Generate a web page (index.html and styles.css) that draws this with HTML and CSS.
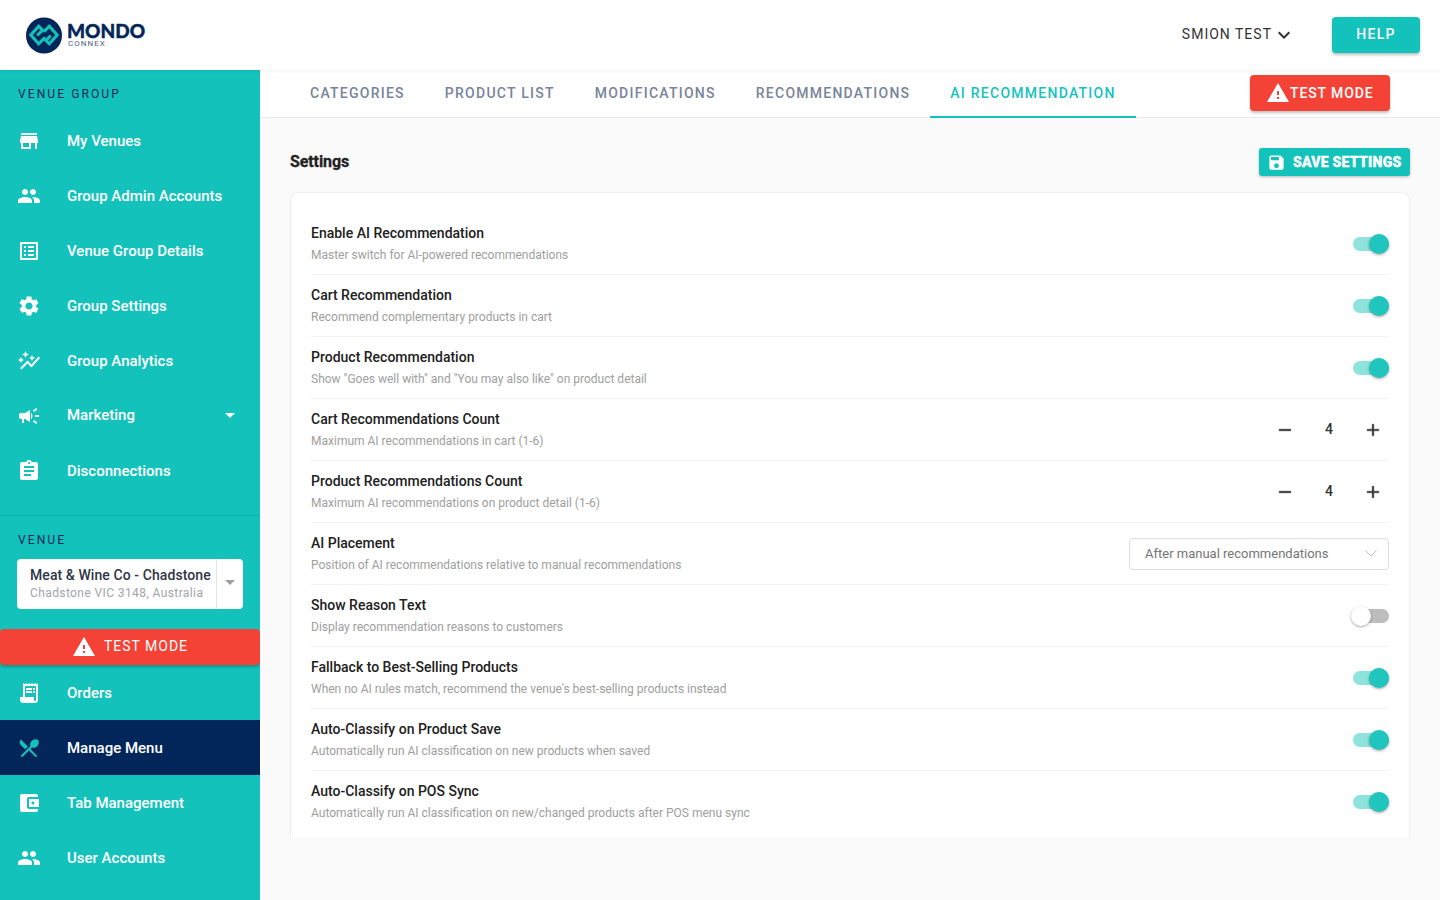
FILE: index.html
```html
<!DOCTYPE html>
<html lang="en">
<head>
    <meta charset="UTF-8">
    <meta name="viewport" content="width=device-width, initial-scale=1.0">
    <title>AI Recommendation Settings</title>
    <link rel="stylesheet" href="styles.css">
</head>
<body>

<svg class="sprite" aria-hidden="true">
    <symbol id="i-store" viewBox="0 0 24 24"><path d="M20 4H4v2h16V4zm1 10v-2l-1-5H4l-1 5v2h1v6h10v-6h4v6h2v-6h1zm-9 4H6v-4h6v4z"/></symbol>
    <symbol id="i-people" viewBox="0 0 24 24"><path d="M16 11c1.66 0 2.99-1.34 2.99-3S17.66 5 16 5c-1.66 0-3 1.34-3 3s1.34 3 3 3zm-8 0c1.66 0 2.99-1.34 2.99-3S9.66 5 8 5C6.34 5 5 6.34 5 8s1.34 3 3 3zm0 2c-2.33 0-7 1.17-7 3.5V19h14v-2.5c0-2.33-4.67-3.5-7-3.5zm8 0c-.29 0-.62.02-.97.05 1.16.84 1.97 1.97 1.97 3.45V19h6v-2.5c0-2.33-4.67-3.5-7-3.5z"/></symbol>
    <symbol id="i-list" viewBox="0 0 24 24"><path d="M19 5v14H5V5h14m1.1-2H3.9c-.5 0-.9.4-.9.9v16.2c0 .4.4.9.9.9h16.2c.4 0 .9-.5.9-.9V3.9c0-.5-.5-.9-.9-.9zM11 7h6v2h-6V7zm0 4h6v2h-6v-2zm0 4h6v2h-6zM7 7h2v2H7zm0 4h2v2H7zm0 4h2v2H7z"/></symbol>
    <symbol id="i-settings" viewBox="0 0 24 24"><path d="M19.14 12.94c.04-.3.06-.61.06-.94 0-.32-.02-.64-.07-.94l2.03-1.58c.18-.14.23-.41.12-.61l-1.92-3.32c-.12-.22-.37-.29-.59-.22l-2.39.96c-.5-.38-1.03-.7-1.62-.94l-.36-2.54c-.04-.24-.24-.41-.48-.41h-3.84c-.24 0-.43.17-.47.41l-.36 2.54c-.59.24-1.13.57-1.62.94l-2.39-.96c-.22-.08-.47 0-.59.22L2.74 8.87c-.12.21-.08.47.12.61l2.03 1.58c-.05.3-.09.63-.09.94s.02.64.07.94l-2.03 1.58c-.18.14-.23.41-.12.61l1.92 3.32c.12.22.37.29.59.22l2.39-.96c.5.38 1.03.7 1.62.94l.36 2.54c.05.24.24.41.48.41h3.84c.24 0 .44-.17.47-.41l.36-2.54c.59-.24 1.13-.56 1.62-.94l2.39.96c.22.08.47 0 .59-.22l1.92-3.32c.12-.22.07-.47-.12-.61l-2.01-1.58zM12 15.6c-1.98 0-3.6-1.62-3.6-3.6s1.62-3.6 3.6-3.6 3.6 1.62 3.6 3.6-1.62 3.6-3.6 3.6z"/></symbol>
    <symbol id="i-graph" viewBox="0 0 24 24"><path d="M14.06 9.94 12 9l2.06-.94L15 6l.94 2.06L18 9l-2.06.94L15 12zM4 14l.94-2.06L7 11l-2.06-.94L4 8l-.94 2.06L1 11l2.06.94zm4.5-5 1.09-2.41L12 5.5 9.59 4.41 8.5 2 7.41 4.41 5 5.5l2.41 1.09zm-4 11.5 6-6.01 4 4L23 8.93l-1.41-1.41-7.09 7.97-4-4L3 19z"/></symbol>
    <symbol id="i-campaign" viewBox="0 0 24 24"><path d="M18 11v2h4v-2h-4zm-2 6.61c.96.71 2.21 1.65 3.2 2.39.4-.53.8-1.07 1.2-1.6-.99-.74-2.24-1.68-3.2-2.4-.4.54-.8 1.08-1.2 1.61zM20.4 5.6c-.4-.53-.8-1.07-1.2-1.6-.99.74-2.24 1.68-3.2 2.4.4.53.8 1.07 1.2 1.6.96-.72 2.21-1.65 3.2-2.4zM4 9c-1.1 0-2 .9-2 2v2c0 1.1.9 2 2 2h1v4h2v-4h1l5 3V6L8 9H4zm11.5 3c0-1.33-.58-2.53-1.5-3.35v6.69c.92-.81 1.5-2.01 1.5-3.34z"/></symbol>
    <symbol id="i-assignment" viewBox="0 0 24 24"><path d="M19 3h-4.18C14.4 1.84 13.3 1 12 1c-1.3 0-2.4.84-2.82 2H5c-1.1 0-2 .9-2 2v14c0 1.1.9 2 2 2h14c1.1 0 2-.9 2-2V5c0-1.1-.9-2-2-2zm-7 0c.55 0 1 .45 1 1s-.45 1-1 1-1-.45-1-1 .45-1 1-1zm2 14H7v-2h7v2zm3-4H7v-2h10v2zm0-4H7V7h10v2z"/></symbol>
    <symbol id="i-receipt" viewBox="0 0 24 24"><path d="M19.5 3.5 18 2l-1.5 1.5L15 2l-1.5 1.5L12 2l-1.5 1.5L9 2 7.5 3.5 6 2v14H3v3c0 1.66 1.34 3 3 3h12c1.66 0 3-1.34 3-3V2l-1.5 1.5zM19 19c0 .55-.45 1-1 1s-1-.45-1-1v-3H8V5h11v14z"/><path d="M9 7h6v2H9zm7 0h2v2h-2zM9 10h6v2H9zm7 0h2v2h-2z"/></symbol>
    <symbol id="i-menu" viewBox="0 0 24 24"><path d="M8.1 13.34l2.83-2.83L3.91 3.5c-1.56 1.56-1.56 4.09 0 5.66l4.19 4.18zm6.78-1.81c1.53.71 3.68.21 5.27-1.38 1.91-1.91 2.28-4.65.81-6.12-1.46-1.46-4.2-1.1-6.12.81-1.59 1.59-2.09 3.74-1.38 5.27L3.7 19.87l1.41 1.41L12 14.41l6.88 6.88 1.41-1.41L13.41 13l1.47-1.47z"/></symbol>
    <symbol id="i-wallet" viewBox="0 0 24 24"><path d="M21 18v1c0 1.1-.9 2-2 2H5c-1.11 0-2-.9-2-2V5c0-1.1.89-2 2-2h14c1.1 0 2 .9 2 2v1h-9c-1.11 0-2 .9-2 2v8c0 1.1.89 2 2 2h9zm-9-2h10V8H12v8zm4-2.5c-.83 0-1.5-.67-1.5-1.5s.67-1.5 1.5-1.5 1.5.67 1.5 1.5-.67 1.5-1.5 1.5z"/></symbol>
    <symbol id="i-warning" viewBox="0 0 24 24"><path d="M1 21h22L12 2 1 21zm12-3h-2v-2h2v2zm0-4h-2v-4h2v4z"/></symbol>
    <symbol id="i-save" viewBox="0 0 24 24"><path d="M17 3H5c-1.11 0-2 .9-2 2v14c0 1.1.89 2 2 2h14c1.1 0 2-.9 2-2V7l-4-4zm-5 16c-1.66 0-3-1.34-3-3s1.34-3 3-3 3 1.34 3 3-1.34 3-3 3zm3-10H5V5h10v4z"/></symbol>
    <symbol id="i-down" viewBox="0 0 24 24"><path d="M7.41 8.59 12 13.17l4.59-4.58L18 10l-6 6-6-6z"/></symbol>
    <symbol id="i-minus" viewBox="0 0 24 24"><path d="M19 13H5v-2h14v2z"/></symbol>
    <symbol id="i-plus" viewBox="0 0 24 24"><path d="M19 13h-6v6h-2v-6H5v-2h6V5h2v6h6v2z"/></symbol>
</svg>

<header class="topbar">
    <div class="logo">
        <svg class="logo-mark" viewBox="0 0 37 37">
            <circle cx="18.5" cy="18.5" r="18.5" fill="#03265a"/>
            <path d="M18.5 14.5 13 9 5 18l8 9 5.5-5.5 5.5 5.5 8-9-8-9-5.5 5.5" fill="none" stroke="#14c2bc" stroke-width="3.2"/>
            <path d="M11.5 18.5 16 14M25.5 18.5 21 23" fill="none" stroke="#14c2bc" stroke-width="3.2"/>
        </svg>
        <div class="logo-text">
            <div class="logo-name">MONDO</div>
            <div class="logo-sub">CONNEX</div>
        </div>
    </div>
    <div class="topbar-right">
        <div class="user-menu">
            <span>SMION TEST</span>
            <svg class="icon"><use href="#i-down"/></svg>
        </div>
        <button class="btn-help">HELP</button>
    </div>
</header>

<div class="layout">
    <nav class="sidebar">
        <div class="nav-heading">VENUE GROUP</div>
        <a class="nav-item"><svg class="icon"><use href="#i-store"/></svg><span>My Venues</span></a>
        <a class="nav-item"><svg class="icon"><use href="#i-people"/></svg><span>Group Admin Accounts</span></a>
        <a class="nav-item"><svg class="icon"><use href="#i-list"/></svg><span>Venue Group Details</span></a>
        <a class="nav-item"><svg class="icon"><use href="#i-settings"/></svg><span>Group Settings</span></a>
        <a class="nav-item"><svg class="icon"><use href="#i-graph"/></svg><span>Group Analytics</span></a>
        <a class="nav-item nav-item-group"><svg class="icon"><use href="#i-campaign"/></svg><span>Marketing</span><i class="caret caret-white"></i></a>
        <a class="nav-item"><svg class="icon"><use href="#i-assignment"/></svg><span>Disconnections</span></a>

        <div class="nav-divider"></div>

        <div class="nav-heading venue-heading">VENUE</div>
        <div class="venue-select">
            <div class="venue-info">
                <div class="venue-name">Meat &amp; Wine Co - Chadstone</div>
                <div class="venue-address">Chadstone VIC 3148, Australia</div>
            </div>
            <div class="venue-arrow"><i class="caret"></i></div>
        </div>

        <div class="test-banner">
            <svg class="icon"><use href="#i-warning"/></svg>
            <span>TEST MODE</span>
        </div>

        <a class="nav-item"><svg class="icon"><use href="#i-receipt"/></svg><span>Orders</span></a>
        <a class="nav-item active"><svg class="icon"><use href="#i-menu"/></svg><span>Manage Menu</span></a>
        <a class="nav-item"><svg class="icon"><use href="#i-wallet"/></svg><span>Tab Management</span></a>
        <a class="nav-item"><svg class="icon"><use href="#i-people"/></svg><span>User Accounts</span></a>
    </nav>

    <main class="main">
        <div class="tabs">
            <a class="tab">CATEGORIES</a>
            <a class="tab">PRODUCT LIST</a>
            <a class="tab">MODIFICATIONS</a>
            <a class="tab">RECOMMENDATIONS</a>
            <a class="tab tab-active">AI RECOMMENDATION</a>
            <button class="btn-test"><svg class="icon"><use href="#i-warning"/></svg>TEST MODE</button>
        </div>

        <div class="content">
            <div class="content-head">
                <h2 class="content-title">Settings</h2>
                <button class="btn-save"><svg class="icon"><use href="#i-save"/></svg>SAVE SETTINGS</button>
            </div>

            <section class="card">
                <div class="row">
                    <div><div class="row-title">Enable AI Recommendation</div><div class="row-sub">Master switch for AI-powered recommendations</div></div>
                    <div class="switch on"><i></i></div>
                </div>
                <div class="row">
                    <div><div class="row-title">Cart Recommendation</div><div class="row-sub">Recommend complementary products in cart</div></div>
                    <div class="switch on"><i></i></div>
                </div>
                <div class="row">
                    <div><div class="row-title">Product Recommendation</div><div class="row-sub">Show "Goes well with" and "You may also like" on product detail</div></div>
                    <div class="switch on"><i></i></div>
                </div>
                <div class="row">
                    <div><div class="row-title">Cart Recommendations Count</div><div class="row-sub">Maximum AI recommendations in cart (1-6)</div></div>
                    <div class="stepper">
                        <svg class="icon"><use href="#i-minus"/></svg>
                        <span class="stepper-value">4</span>
                        <svg class="icon"><use href="#i-plus"/></svg>
                    </div>
                </div>
                <div class="row">
                    <div><div class="row-title">Product Recommendations Count</div><div class="row-sub">Maximum AI recommendations on product detail (1-6)</div></div>
                    <div class="stepper">
                        <svg class="icon"><use href="#i-minus"/></svg>
                        <span class="stepper-value">4</span>
                        <svg class="icon"><use href="#i-plus"/></svg>
                    </div>
                </div>
                <div class="row">
                    <div><div class="row-title">AI Placement</div><div class="row-sub">Position of AI recommendations relative to manual recommendations</div></div>
                    <div class="select">
                        <span>After manual recommendations</span>
                        <svg class="select-chevron" viewBox="0 0 12 7"><path d="M.5.5 6 6l5.5-5.5" fill="none" stroke="#bdbdc4"/></svg>
                    </div>
                </div>
                <div class="row">
                    <div><div class="row-title">Show Reason Text</div><div class="row-sub">Display recommendation reasons to customers</div></div>
                    <div class="switch"><i></i></div>
                </div>
                <div class="row">
                    <div><div class="row-title">Fallback to Best-Selling Products</div><div class="row-sub">When no AI rules match, recommend the venue's best-selling products instead</div></div>
                    <div class="switch on"><i></i></div>
                </div>
                <div class="row">
                    <div><div class="row-title">Auto-Classify on Product Save</div><div class="row-sub">Automatically run AI classification on new products when saved</div></div>
                    <div class="switch on"><i></i></div>
                </div>
                <div class="row">
                    <div><div class="row-title">Auto-Classify on POS Sync</div><div class="row-sub">Automatically run AI classification on new/changed products after POS menu sync</div></div>
                    <div class="switch on"><i></i></div>
                </div>
            </section>
        </div>
    </main>
</div>

</body>
</html>
```

FILE: styles.css
```css
* {
    box-sizing: border-box;
}

body {
    font-family: 'Roboto', 'Liberation Sans', sans-serif;
    margin: 0;
    height: 100vh;
    overflow: hidden;
    display: flex;
    flex-direction: column;
    color: #212121;
    background-color: #fafafa;
}

button {
    font-family: inherit;
    border: none;
    cursor: pointer;
}

.sprite {
    display: none;
}

.icon {
    width: 24px;
    height: 24px;
    fill: currentColor;
    flex-shrink: 0;
}

/* top bar */
.topbar {
    height: 70px;
    flex-shrink: 0;
    background-color: white;
    display: flex;
    align-items: center;
    justify-content: space-between;
    padding: 0 20px 0 26px;
    position: relative;
    z-index: 2;
    box-shadow: 0 1px 4px rgba(0, 0, 0, 0.06);
}

.logo {
    display: flex;
    align-items: center;
    gap: 5px;
}

.logo-mark {
    width: 36px;
    height: 37px;
}

.logo-name {
    font-family: 'Lato', sans-serif;
    font-weight: 900;
    font-size: 19px;
    line-height: 16px;
    -webkit-text-stroke: 0.4px #03265a;
    color: #03265a;
}

.logo-sub {
    font-size: 8px;
    line-height: 8px;
    letter-spacing: 1px;
    color: #4d5f80;
    margin: 1px 0 0 1px;
}

.topbar-right {
    display: flex;
    align-items: center;
    gap: 36px;
}

.user-menu {
    display: flex;
    align-items: center;
    font-size: 14px;
    letter-spacing: 1px;
    color: #333;
}

.user-menu span {
    padding-bottom: 2px;
}

.btn-help {
    width: 88px;
    height: 36px;
    padding: 0 0 2px;
    border-radius: 4px;
    background-color: #14c2bc;
    color: white;
    font-size: 14px;
    font-weight: 500;
    letter-spacing: 1.25px;
    box-shadow: 0 2px 3px rgba(0, 0, 0, 0.25);
}

/* sidebar */
.layout {
    flex: 1;
    display: flex;
    min-height: 0;
}

.sidebar {
    width: 260px;
    flex-shrink: 0;
    background-color: #14c2bc;
    overflow: hidden;
}

.nav-heading {
    padding: 17px 18px 0;
    height: 43px;
    font-size: 12px;
    line-height: 14px;
    letter-spacing: 2.1px;
    color: #03265a;
}

.nav-item {
    height: 55px;
    display: flex;
    align-items: center;
    padding: 0 18px 0 17px;
    gap: 26px;
    color: white;
    font-size: 15px;
    font-weight: 500;
}

.nav-item-group span {
    margin-bottom: 2px;
}

.nav-item.active {
    background-color: #03265a;
}

.nav-item.active .icon {
    color: #14c2bc;
}

.caret {
    width: 0;
    height: 0;
    display: block;
    border-left: 5px solid transparent;
    border-right: 5px solid transparent;
    border-top: 5px solid #9e9e9e;
}

.caret-white {
    border-top-color: white;
    margin-left: auto;
    margin-right: 7px;
}

.nav-divider {
    height: 1px;
    margin-top: 17px;
    background-color: rgba(0, 0, 0, 0.1);
}

.venue-select {
    margin: 0 17px;
    height: 50px;
    background-color: white;
    border-radius: 4px;
    display: flex;
}

.venue-info {
    width: 200px;
    padding: 7px 0 0 13px;
    border-right: 1px solid #e6e6e6;
    white-space: nowrap;
}

.venue-name {
    font-size: 14px;
    line-height: 18px;
    letter-spacing: 0.08px;
    color: #2f3446;
    font-weight: 500;
}

.venue-address {
    font-size: 12px;
    line-height: 18px;
    letter-spacing: 0.4px;
    color: #a3a3ad;
}

.venue-arrow {
    flex: 1;
    display: flex;
    align-items: center;
    justify-content: center;
    padding-bottom: 4px;
}

.test-banner {
    margin-top: 20px;
    height: 36px;
    background-color: #f44336;
    border-radius: 4px;
    color: white;
    display: flex;
    align-items: center;
    justify-content: center;
    gap: 8px;
    font-size: 14px;
    letter-spacing: 1px;
    box-shadow: 0 2px 3px rgba(0, 0, 0, 0.25);
}

.test-banner span {
    padding-bottom: 2px;
}

/* main area */
.main {
    flex: 1;
    display: flex;
    flex-direction: column;
    min-width: 0;
}

.tabs {
    height: 48px;
    flex-shrink: 0;
    background-color: white;
    border-bottom: 1px solid #e8e8e8;
    padding-left: 30px;
    display: flex;
}

.tab {
    height: 48px;
    padding: 0 20px;
    display: flex;
    align-items: center;
    font-size: 14px;
    font-weight: 500;
    letter-spacing: 1.25px;
    color: #78849a;
    border-bottom: 2px solid transparent;
}

.tab-active {
    color: #14c2bc;
    border-bottom-color: #14c2bc;
}

.btn-test {
    margin: 5px 50px 0 auto;
    width: 140px;
    height: 36px;
    background-color: #f44336;
    color: white;
    border-radius: 4px;
    display: flex;
    align-items: center;
    padding: 0 0 0 16px;
    font-size: 14px;
    font-weight: 500;
    letter-spacing: 0.9px;
    box-shadow: 0 2px 3px rgba(0, 0, 0, 0.25);
}

.content {
    flex: 1;
    min-height: 0;
    padding: 30px 30px 62px;
    display: flex;
    flex-direction: column;
}

.content-head {
    display: flex;
    align-items: center;
    justify-content: space-between;
    height: 28px;
    margin-bottom: 16px;
}

.content-title {
    margin: 0 0 2px;
    font-size: 16px;
    font-weight: 700;
    letter-spacing: -0.1px;
    -webkit-text-stroke: 0.3px #212121;
    color: #212121;
}

.btn-save {
    height: 28px;
    width: 151px;
    background-color: #14c2bc;
    color: white;
    border-radius: 3px;
    display: flex;
    align-items: center;
    gap: 7.5px;
    padding: 0 0 0 7.5px;
    font-size: 14px;
    font-weight: 900;
    letter-spacing: 0.25px;
    -webkit-text-stroke: 0.3px white;
    box-shadow: 0 1px 3px rgba(0, 0, 0, 0.25);
}

.btn-save .icon {
    width: 19px;
    height: 19px;
}

.card {
    flex: 1;
    min-height: 0;
    overflow: hidden;
    background-color: white;
    border: 1px solid #eeeeee;
    border-bottom: none;
    border-radius: 8px 8px 0 0;
    padding: 20px 20px 0;
}

.row {
    height: 62px;
    display: flex;
    align-items: center;
    justify-content: space-between;
    border-bottom: 1px solid #f3f3f3;
}

.row:last-child {
    border-bottom: none;
}

.row > div:first-child {
    align-self: flex-start;
    padding-top: 10px;
}

.row-title {
    font-size: 14px;
    line-height: 20px;
    font-weight: 500;
    color: #212121;
}

.row-sub {
    font-size: 12px;
    line-height: 16px;
    margin-top: 4px;
    color: #9e9e9e;
}

/* switches */
.switch {
    width: 36px;
    height: 14px;
    border-radius: 7px;
    background-color: #bdbdbd;
    display: flex;
    align-items: center;
}

.switch i {
    width: 20px;
    height: 20px;
    border-radius: 50%;
    background-color: white;
    margin-left: -2px;
    flex-shrink: 0;
    box-shadow: 0 1px 3px rgba(0, 0, 0, 0.35);
}

.switch.on {
    background-color: #8fe3dd;
    justify-content: flex-end;
}

.switch.on i {
    margin-left: 0;
    background-color: #20c6bd;
}

/* stepper */
.stepper {
    display: flex;
    align-items: center;
    color: #333;
}

.stepper .icon {
    width: 20px;
    height: 20px;
    margin: 0 6px;
    stroke: currentColor;
    stroke-width: 0.5;
}

.stepper-value {
    width: 56px;
    text-align: center;
    font-size: 14px;
    font-weight: 500;
    margin-top: -2px;
}

/* select */
.select {
    width: 260px;
    height: 32px;
    border: 1px solid #dcdce2;
    border-radius: 4px;
    padding: 0 15px;
    display: flex;
    align-items: center;
    justify-content: space-between;
    font-size: 13px;
    color: #757575;
}

.select-chevron {
    width: 12px;
    height: 7px;
    margin-right: -4px;
}
```
